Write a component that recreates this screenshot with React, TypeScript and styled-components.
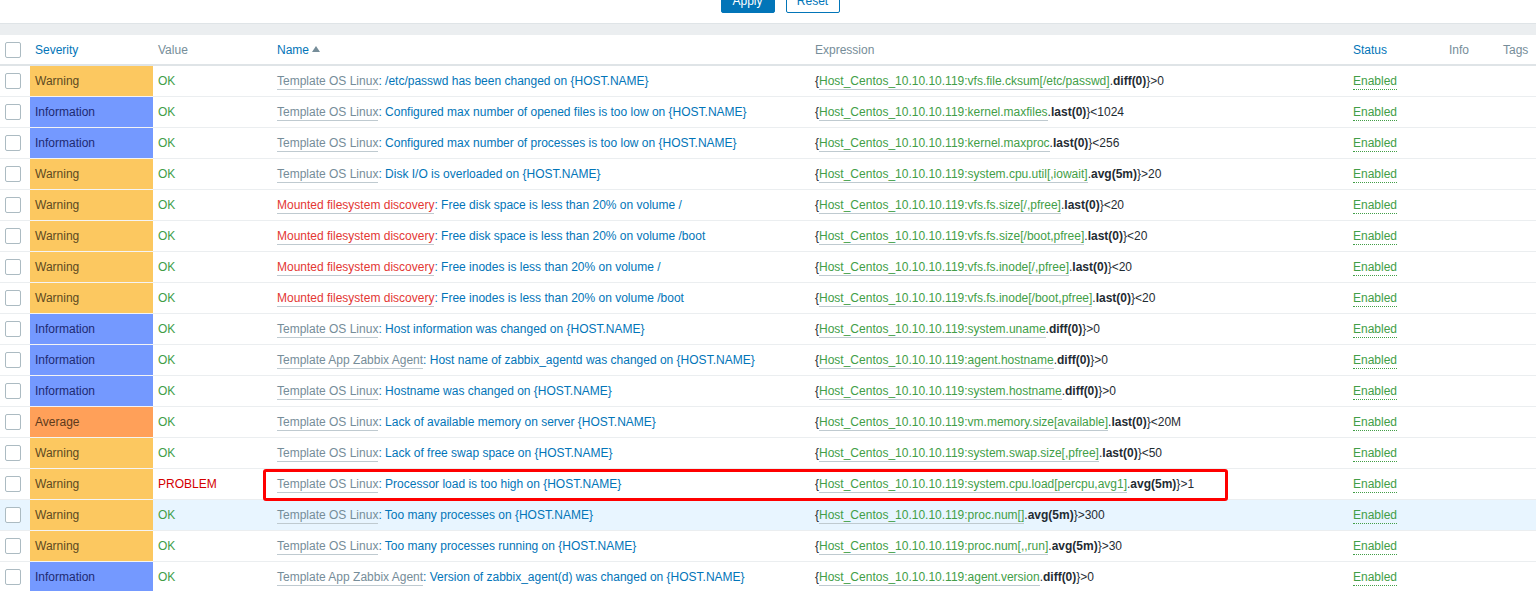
import React from "react";
import styled, { createGlobalStyle, css } from "styled-components";

const Global = createGlobalStyle`
  html, body { margin: 0; padding: 0; background: #fff; }
  body {
    font-family: "Liberation Sans", Arial, sans-serif;
    font-size: 12px;
    color: #1f2c33;
    overflow: hidden;
  }
`;

const Page = styled.div`
  width: 1536px;
`;

const FilterBar = styled.div`
  display: flex;
  justify-content: center;
  gap: 11px;
  padding-left: 24px;
  margin-top: -11px;
  height: 35px;
  box-sizing: border-box;
  border-bottom: 1px solid #dfe4e7;
`;

const Button = styled.button<{ $primary?: boolean }>`
  height: 24px;
  width: 54px;
  box-sizing: border-box;
  border-radius: 2px;
  font-family: inherit;
  font-size: 12px;
  padding: 0;
  cursor: pointer;
  border: 1px solid #0275b8;
  ${(p) =>
    p.$primary
      ? css`
          background: #0275b8;
          color: #fff;
        `
      : css`
          background: #fff;
          color: #0275b8;
        `}
`;

const Band = styled.div`
  height: 11px;
  background: #ebeef0;
`;

const Table = styled.table`
  width: 1536px;
  table-layout: fixed;
  border-collapse: collapse;
`;

const HeadRow = styled.tr`
  height: 30px;
  border-bottom: 2px solid #dfe4e7;
`;

const HeadCell = styled.th<{ $link?: boolean }>`
  padding: 0 5px;
  text-align: left;
  font-weight: normal;
  white-space: nowrap;
  color: ${(p) => (p.$link ? "#0275b8" : "#768d99")};
`;

const SortArrow = styled.span`
  display: inline-block;
  margin-left: 3px;
  vertical-align: 2px;
  width: 0;
  height: 0;
  border-left: 4px solid transparent;
  border-right: 4px solid transparent;
  border-bottom: 6px solid #768d99;
`;

const Row = styled.tr<{ $hover?: boolean }>`
  height: 31px;
  border-bottom: 1px solid #ebeef0;
  background: ${(p) => (p.$hover ? "#e8f5ff" : "#fff")};
`;

const Cell = styled.td`
  padding: 0 5px;
  white-space: nowrap;
  overflow: visible;
  vertical-align: middle;
`;

const CheckCell = styled(Cell)`
  padding: 0 5px;
`;

const Checkbox = styled.span`
  display: block;
  width: 16px;
  height: 16px;
  box-sizing: border-box;
  border: 1px solid #acbbc2;
  border-radius: 2px;
  background: #fff;
`;

type Level = "Warning" | "Information" | "Average";

const levelBg: Record<Level, string> = {
  Warning: "#fcc860",
  Information: "#7499ff",
  Average: "#ffa059",
};
const levelFg: Record<Level, string> = {
  Warning: "#5c4a22",
  Information: "#1e2a72",
  Average: "#5c3a1c",
};

const SeverityCell = styled(Cell)<{ $level: Level }>`
  background: ${(p) => levelBg[p.$level]};
  color: ${(p) => levelFg[p.$level]};
  border-bottom: 1px solid #f4f4f4;
`;

const ValueCell = styled(Cell)<{ $problem?: boolean }>`
  color: ${(p) => (p.$problem ? "#d40000" : "#429e47")};
`;

const NameCell = styled(Cell)`
  position: relative;
  color: #0275b8;
`;

const Prefix = styled.span<{ $discovery?: boolean }>`
  color: ${(p) => (p.$discovery ? "#e33734" : "#768d99")};
  border-bottom: 1px solid #bfcad0;
  padding-bottom: 1px;
`;

const Marker = styled.span`
  position: absolute;
  left: -9px;
  top: 0;
  width: 965px;
  height: 32px;
  box-sizing: border-box;
  border: 3px solid #f00;
  border-radius: 3px;
  z-index: 2;
  pointer-events: none;
`;

const ExprCell = styled(Cell)`
  color: #1f2c33;
`;

const ItemLink = styled.span`
  color: #429e47;
  border-bottom: 1px solid #bfcad0;
  padding-bottom: 1px;
`;

const Func = styled.span`
  color: #1f2c33;
  font-weight: bold;
`;

const StatusLink = styled.span`
  color: #429e47;
  border-bottom: 1px dotted #429e47;
  padding-bottom: 1px;
`;

type Trigger = {
  level: Level;
  problem?: boolean;
  prefix: string;
  discovery?: boolean;
  name: string;
  key: string;
  func: string;
  cmp: string;
  hover?: boolean;
  marked?: boolean;
};

const OS = "Template OS Linux";
const AGENT = "Template App Zabbix Agent";
const MFD = "Mounted filesystem discovery";

const rows: Trigger[] = [
  { level: "Warning", prefix: OS, name: "/etc/passwd has been changed on {HOST.NAME}", key: "vfs.file.cksum[/etc/passwd]", func: "diff(0)", cmp: ">0" },
  { level: "Information", prefix: OS, name: "Configured max number of opened files is too low on {HOST.NAME}", key: "kernel.maxfiles", func: "last(0)", cmp: "<1024" },
  { level: "Information", prefix: OS, name: "Configured max number of processes is too low on {HOST.NAME}", key: "kernel.maxproc", func: "last(0)", cmp: "<256" },
  { level: "Warning", prefix: OS, name: "Disk I/O is overloaded on {HOST.NAME}", key: "system.cpu.util[,iowait]", func: "avg(5m)", cmp: ">20" },
  { level: "Warning", prefix: MFD, discovery: true, name: "Free disk space is less than 20% on volume /", key: "vfs.fs.size[/,pfree]", func: "last(0)", cmp: "<20" },
  { level: "Warning", prefix: MFD, discovery: true, name: "Free disk space is less than 20% on volume /boot", key: "vfs.fs.size[/boot,pfree]", func: "last(0)", cmp: "<20" },
  { level: "Warning", prefix: MFD, discovery: true, name: "Free inodes is less than 20% on volume /", key: "vfs.fs.inode[/,pfree]", func: "last(0)", cmp: "<20" },
  { level: "Warning", prefix: MFD, discovery: true, name: "Free inodes is less than 20% on volume /boot", key: "vfs.fs.inode[/boot,pfree]", func: "last(0)", cmp: "<20" },
  { level: "Information", prefix: OS, name: "Host information was changed on {HOST.NAME}", key: "system.uname", func: "diff(0)", cmp: ">0" },
  { level: "Information", prefix: AGENT, name: "Host name of zabbix_agentd was changed on {HOST.NAME}", key: "agent.hostname", func: "diff(0)", cmp: ">0" },
  { level: "Information", prefix: OS, name: "Hostname was changed on {HOST.NAME}", key: "system.hostname", func: "diff(0)", cmp: ">0" },
  { level: "Average", prefix: OS, name: "Lack of available memory on server {HOST.NAME}", key: "vm.memory.size[available]", func: "last(0)", cmp: "<20M" },
  { level: "Warning", prefix: OS, name: "Lack of free swap space on {HOST.NAME}", key: "system.swap.size[,pfree]", func: "last(0)", cmp: "<50" },
  { level: "Warning", problem: true, marked: true, prefix: OS, name: "Processor load is too high on {HOST.NAME}", key: "system.cpu.load[percpu,avg1]", func: "avg(5m)", cmp: ">1" },
  { level: "Warning", hover: true, prefix: OS, name: "Too many processes on {HOST.NAME}", key: "proc.num[]", func: "avg(5m)", cmp: ">300" },
  { level: "Warning", prefix: OS, name: "Too many processes running on {HOST.NAME}", key: "proc.num[,,run]", func: "avg(5m)", cmp: ">30" },
  { level: "Information", prefix: AGENT, name: "Version of zabbix_agent(d) was changed on {HOST.NAME}", key: "agent.version", func: "diff(0)", cmp: ">0" },
];

const HOST = "Host_Centos_10.10.10.119";

export default function App() {
  return (
    <Page>
      <Global />
      <FilterBar>
        <Button $primary>Apply</Button>
        <Button>Reset</Button>
      </FilterBar>
      <Band />
      <Table>
        <colgroup>
          <col style={{ width: 30 }} />
          <col style={{ width: 123 }} />
          <col style={{ width: 119 }} />
          <col style={{ width: 538 }} />
          <col style={{ width: 538 }} />
          <col style={{ width: 96 }} />
          <col style={{ width: 54 }} />
          <col style={{ width: 38 }} />
        </colgroup>
        <thead>
          <HeadRow>
            <HeadCell>
              <Checkbox />
            </HeadCell>
            <HeadCell $link>Severity</HeadCell>
            <HeadCell>Value</HeadCell>
            <HeadCell $link>
              Name
              <SortArrow />
            </HeadCell>
            <HeadCell>Expression</HeadCell>
            <HeadCell $link>Status</HeadCell>
            <HeadCell>Info</HeadCell>
            <HeadCell>Tags</HeadCell>
          </HeadRow>
        </thead>
        <tbody>
          {rows.map((r, i) => (
            <Row key={i} $hover={r.hover}>
              <CheckCell>
                <Checkbox />
              </CheckCell>
              <SeverityCell $level={r.level}>{r.level}</SeverityCell>
              <ValueCell $problem={r.problem}>{r.problem ? "PROBLEM" : "OK"}</ValueCell>
              <NameCell>
                {r.marked && <Marker />}
                <Prefix $discovery={r.discovery}>{r.prefix}</Prefix>: {r.name}
              </NameCell>
              <ExprCell>
                {"{"}
                <ItemLink>
                  {HOST}:{r.key}
                </ItemLink>
                .<Func>{r.func}</Func>
                {"}"}
                {r.cmp}
              </ExprCell>
              <Cell>
                <StatusLink>Enabled</StatusLink>
              </Cell>
              <Cell />
              <Cell />
            </Row>
          ))}
        </tbody>
      </Table>
    </Page>
  );
}
